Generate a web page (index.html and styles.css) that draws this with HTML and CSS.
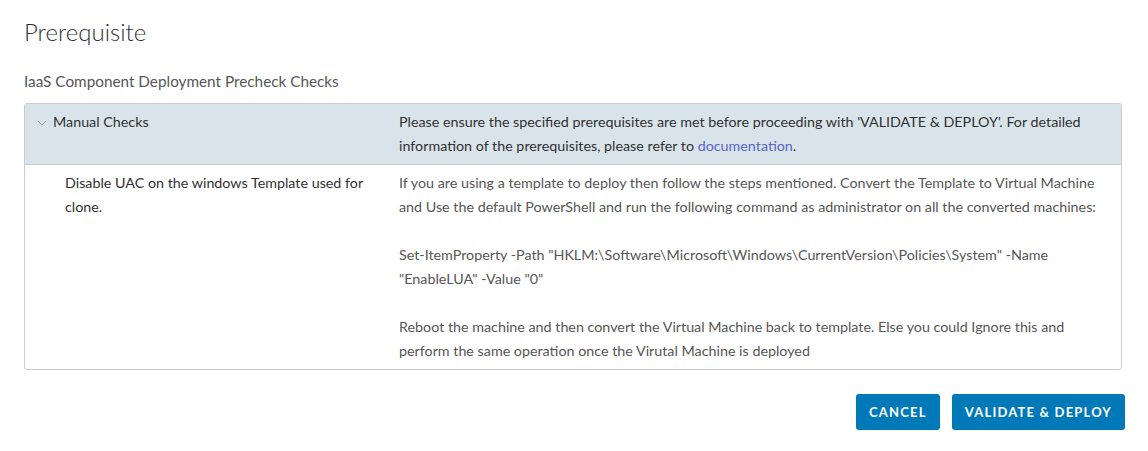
FILE: index.html
```html
<!DOCTYPE html>
<html>
<head>
<meta charset="utf-8">
<link rel="stylesheet" href="styles.css">
</head>
<body>
<div class="page">
  <h1 class="title">Prerequisite</h1>
  <p class="subtitle">IaaS Component Deployment Precheck Checks</p>
  <div class="checks">
    <div class="row head">
      <div class="cell name">
        <svg class="chev" width="10" height="6" viewBox="0 0 10 6"><path d="M1 1 L5 5 L9 1" fill="none" stroke="#9a9a9a" stroke-width="1"/></svg>
        <span>Manual Checks</span>
      </div>
      <div class="cell desc">Please ensure the specified prerequisites are met before proceeding with 'VALIDATE &amp; DEPLOY'. For detailed information of the prerequisites, please refer to <a href="#" class="link">documentation</a>.</div>
    </div>
    <div class="row body">
      <div class="cell name sub">Disable UAC on the windows Template used for clone.</div>
      <div class="cell desc">
        <p>If you are using a template to deploy then follow the steps mentioned. Convert the Template to Virtual Machine and Use the default PowerShell and run the following command as administrator on all the converted machines:</p>
        <p>Set-ItemProperty -Path "HKLM:\Software\Microsoft\Windows\CurrentVersion\Policies\System" -Name "EnableLUA" -Value "0"</p>
        <p>Reboot the machine and then convert the Virtual Machine back to template. Else you could Ignore this and perform the same operation once the Virutal Machine is deployed</p>
      </div>
    </div>
  </div>
  <div class="actions">
    <button class="btn">CANCEL</button>
    <button class="btn">VALIDATE &amp; DEPLOY</button>
  </div>
</div>
</body>
</html>
```
FILE: styles.css
```css
html, body {
  margin: 0;
  padding: 0;
  background: #fff;
}
body {
  font-family: Lato, "Open Sans", sans-serif;
  color: #565656;
}
.page {
  padding: 17px 23px 0 24px;
}
.title {
  margin: 0;
  font-size: 24px;
  font-weight: 300;
  color: #313131;
  line-height: 30px;
}
.subtitle {
  margin: 25px 0 0;
  font-size: 15.3px;
  line-height: 18px;
  color: #565656;
}
.checks {
  margin-top: 13px;
  border: 1px solid #ccc;
  border-radius: 3px;
  overflow: hidden;
  width: 1096px;
}
.row {
  display: grid;
  grid-template-columns: 374px 1fr;
}
.row.head {
  background: #d9e4ea;
  color: #313131;
  border-bottom: 1px solid #ccc;
}
.cell {
  padding: 6px 0;
  font-size: 14.3px;
  line-height: 24px;
}
.cell.name {
  padding-left: 12px;
  display: flex;
  align-items: flex-start;
  gap: 6px;
}
.cell.name.sub {
  padding-left: 40px;
  padding-right: 24px;
  display: block;
  color: #313131;
}
.chev {
  margin-top: 10px;
  flex: none;
}
.cell.desc {
  padding-right: 15px;
}
.cell.desc p {
  margin: 0 0 24px;
}
.cell.desc p:last-child {
  margin-bottom: 0;
}
.link {
  color: #5a64c8;
  text-decoration: none;
}
.actions {
  display: flex;
  justify-content: flex-end;
  gap: 12px;
  margin-top: 24px;
  width: 1101px;
}
.btn {
  height: 36px;
  padding: 0 13px;
  background: #0079b8;
  color: #fff;
  border: none;
  border-radius: 3px;
  font-family: inherit;
  font-size: 13px;
  font-weight: 700;
  letter-spacing: 1.2px;
}
```
